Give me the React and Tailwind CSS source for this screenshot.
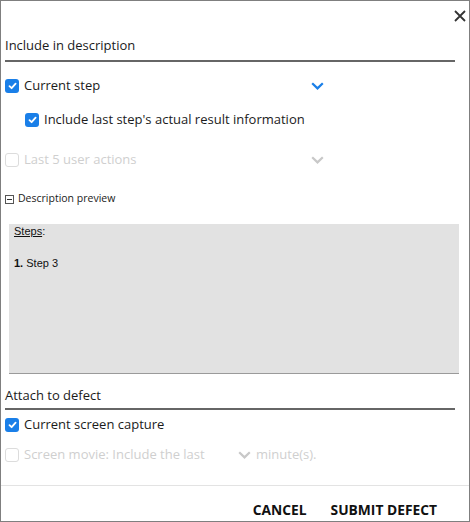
import React from "react";

const font = { fontFamily: '"Open Sans", "Noto Sans", sans-serif' };

function Check({ checked, disabled }) {
  if (checked) {
    return (
      <span className="flex h-[14px] w-[14px] shrink-0 items-center justify-center rounded-[3px] bg-[#1a7fe8]">
        <svg width="9" height="8" viewBox="0 0 9 8">
          <path d="M1.5 4.2 L3.6 6.2 L7.6 1.6" fill="none" stroke="white" strokeWidth="1.8" strokeLinecap="round" strokeLinejoin="round" />
        </svg>
      </span>
    );
  }
  return (
    <span
      className={
        "h-[14px] w-[14px] shrink-0 rounded-[3px] border " +
        (disabled ? "border-[#dcdcdc]" : "border-[#777]")
      }
    />
  );
}

function Chevron({ color }) {
  return (
    <svg width="13" height="8" viewBox="0 0 13 8">
      <path d="M1.2 1.2 L6.5 6.4 L11.8 1.2" fill="none" stroke={color} strokeWidth="2.2" />
    </svg>
  );
}

function Row({ className, children }) {
  return <div className={"flex h-[24px] items-center " + className}>{children}</div>;
}

export default function App() {
  return (
    <div
      className="flex h-[522px] w-[470px] flex-col border border-[#7f7f7f] bg-white text-[13px] text-[#1b1b1b]"
      style={font}
    >
      <div className="flex h-[30px] items-center justify-end pr-[3px]">
        <svg width="12" height="12" viewBox="0 0 12 12">
          <path d="M1 1 L11 11 M11 1 L1 11" stroke="#333" strokeWidth="1.8" />
        </svg>
      </div>

      <div className="ml-[4px] mr-[14px]">
        <div className="flex h-[29px] items-center">Include in description</div>
        <div className="h-[2px] bg-[#666]" />
      </div>

      <Row className="mt-[12px] pl-[4px]">
        <Check checked />
        <span className="ml-[5px] w-[287px]">Current step</span>
        <Chevron color="#1a7fe8" />
      </Row>

      <Row className="mt-[10px] pl-[24px]">
        <Check checked />
        <span className="ml-[5px]">Include last step's actual result information</span>
      </Row>

      <Row className="mt-[16px] pl-[4px] text-[#cfcfcf]">
        <Check disabled />
        <span className="ml-[5px] w-[287px]">Last 5 user actions</span>
        <Chevron color="#c8c8c8" />
      </Row>

      <div className="mt-[19px] flex h-[16px] items-center pl-[4px] text-[10.5px]">
        <span className="flex h-[9px] w-[9px] items-center justify-center border border-[#555]">
          <span className="h-px w-[5px] bg-[#333]" />
        </span>
        <span className="ml-[4px]">Description preview</span>
      </div>

      <div
        className="ml-[8px] mt-[17px] h-[150px] w-[450px] border-b border-[#9a9a9a] bg-[#e2e2e2] px-[5px] text-[11px] text-[#111]"
        style={{ fontFamily: '"Liberation Sans", Arial, sans-serif' }}
      >
        <div className="leading-[14px]">
          <span className="underline">Steps</span>:
        </div>
        <div className="mt-[18px] leading-[14px]">
          <b>1.</b> Step 3
        </div>
      </div>

      <div className="ml-[4px] mr-[14px] mt-[9px]">
        <div className="flex h-[25px] items-center">Attach to defect</div>
        <div className="h-[2px] bg-[#666]" />
      </div>

      <Row className="mt-[3px] pl-[4px]">
        <Check checked />
        <span className="ml-[5px]">Current screen capture</span>
      </Row>

      <Row className="mt-[6px] pl-[4px] text-[#cfcfcf]">
        <Check disabled />
        <span className="ml-[5px] w-[214px]">Screen movie: Include the last</span>
        <Chevron color="#c8c8c8" />
        <span className="ml-[5px]">minute(s).</span>
      </Row>

      <div className="mt-[18px] h-px bg-[#e3e3e3]" />

      <div className="flex justify-end gap-[24px] pr-[32px] pt-[16px] text-[13.8px] font-bold leading-[16px] text-[#111]">
        <span>CANCEL</span>
        <span>SUBMIT DEFECT</span>
      </div>
    </div>
  );
}
